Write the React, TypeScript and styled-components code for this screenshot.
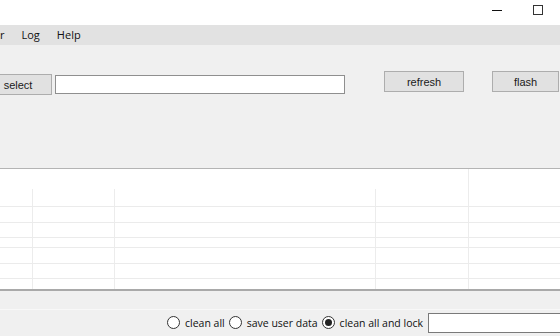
import styled, { createGlobalStyle } from "styled-components";

const GlobalStyle = createGlobalStyle`
  html, body {
    margin: 0;
    padding: 0;
    background: #f0f0f0;
  }
  * {
    box-sizing: border-box;
  }
`;

/* --- window chrome --- */

const Window = styled.div`
  width: 560px;
  height: 336px;
  overflow: hidden;
  display: flex;
  flex-direction: column;
  background: #f0f0f0;
  font-family: "Open Sans", "Noto Sans", sans-serif;
  color: #000;
`;

const TitleBar = styled.div`
  height: 25px;
  background: #fff;
  display: flex;
  justify-content: flex-end;
  align-items: flex-start;
`;

const Minimize = styled.div`
  width: 10px;
  height: 1px;
  background: #111;
  margin-top: 10px;
  margin-right: 31px;
`;

const Maximize = styled.div`
  width: 10px;
  height: 10px;
  border: 1px solid #333;
  margin-top: 5px;
  margin-right: 17px;
`;

const MenuBar = styled.div`
  height: 20px;
  background: #e2e2e2;
  display: flex;
  align-items: center;
  font-size: 11px;
`;

const MenuItem = styled.span<{ $first?: boolean }>`
  padding: 0 8.5px;
  padding-left: ${(p) => (p.$first ? "0" : "8.5px")};
  line-height: 20px;
  color: #111;
`;

/* --- top panel --- */

const Toolbar = styled.div`
  height: 124px;
  border-bottom: 1px solid #b4b4b4;
  display: flex;
  align-items: flex-start;
  padding-top: 26px;
`;

const Button = styled.button<{ $width: number; $top?: number; $shift?: number }>`
  width: ${(p) => p.$width}px;
  height: 21px;
  margin-top: ${(p) => p.$top ?? 0}px;
  margin-left: ${(p) => p.$shift ?? 0}px;
  background: #e1e1e1;
  border: 1px solid #adadad;
  border-radius: 0;
  padding: 0;
  font-family: "Liberation Sans", Arial, sans-serif;
  font-size: 11px;
  color: #1a1a1a;
`;

const PathInput = styled.input`
  width: 290px;
  height: 19px;
  margin-top: 4px;
  margin-left: 3px;
  background: #fff;
  border: 1px solid #8f8f8f;
  padding: 0 3px;
  outline: none;
`;

/* --- list view --- */

const List = styled.div`
  height: 122px;
  background: #fff;
  border-bottom: 2px solid #a9a9a9;
  display: grid;
  grid-template-columns: 33px 82px 261px 93px 1fr;
`;

const Cell = styled.div<{ $height: number; $vline: boolean; $hline: boolean }>`
  height: ${(p) => p.$height}px;
  border-right: ${(p) => (p.$vline ? "1px solid #ececec" : "none")};
  border-bottom: ${(p) => (p.$hline ? "1px solid #ebebeb" : "none")};
`;

const Strip = styled.div`
  height: 19px;
  border-bottom: 1px solid #f8f8f8;
`;

/* --- bottom options --- */

const Options = styled.div`
  flex: 1;
  display: flex;
  justify-content: flex-end;
  align-items: center;
  font-size: 10.5px;
  padding-bottom: 1px;
`;

const RadioLabel = styled.label`
  display: flex;
  align-items: center;
  gap: 5px;
  margin-right: 4px;
  white-space: nowrap;
  color: #111;
`;

const RadioCircle = styled.span<{ $checked?: boolean }>`
  width: 13px;
  height: 13px;
  border-radius: 50%;
  border: 1px solid #333;
  background: #fff;
  display: flex;
  align-items: center;
  justify-content: center;
  &::after {
    content: "";
    width: 7px;
    height: 7px;
    border-radius: 50%;
    background: ${(p) => (p.$checked ? "#222" : "transparent")};
  }
`;

const LockInput = styled.input`
  width: 140px;
  height: 20px;
  margin-left: 1px;
  margin-right: -8px;
  background: #fff;
  border: 1px solid #7a7a7a;
  outline: none;
`;

const rowHeights = [20, 18, 16, 15, 10, 16, 15, 10];
const columns = 5;

const radios = [
  { label: "clean all", checked: false },
  { label: "save user data", checked: false },
  { label: "clean all and lock", checked: true },
];

export default function App() {
  return (
    <>
      <GlobalStyle />
      <Window>
        <TitleBar>
          <Minimize />
          <Maximize />
        </TitleBar>

        <MenuBar>
          <MenuItem $first>r</MenuItem>
          <MenuItem>Log</MenuItem>
          <MenuItem>Help</MenuItem>
        </MenuBar>

        <Toolbar>
          <Button $width={68} $top={3} $shift={-16}>
            select
          </Button>
          <PathInput />
          <Button $width={80} $shift={39}>
            refresh
          </Button>
          <Button $width={67} $shift={28}>
            flash
          </Button>
        </Toolbar>

        <List>
          {rowHeights.map((h, r) =>
            Array.from({ length: columns }).map((_, c) => (
              <Cell
                key={`${r}-${c}`}
                $height={h}
                $vline={c < columns - 1 && (r > 0 || c === 3)}
                $hline={r > 0 && r < rowHeights.length - 1}
              />
            ))
          )}
        </List>

        <Strip />

        <Options>
          {radios.map((o) => (
            <RadioLabel key={o.label}>
              <RadioCircle $checked={o.checked} />
              {o.label}
            </RadioLabel>
          ))}
          <LockInput />
        </Options>
      </Window>
    </>
  );
}
